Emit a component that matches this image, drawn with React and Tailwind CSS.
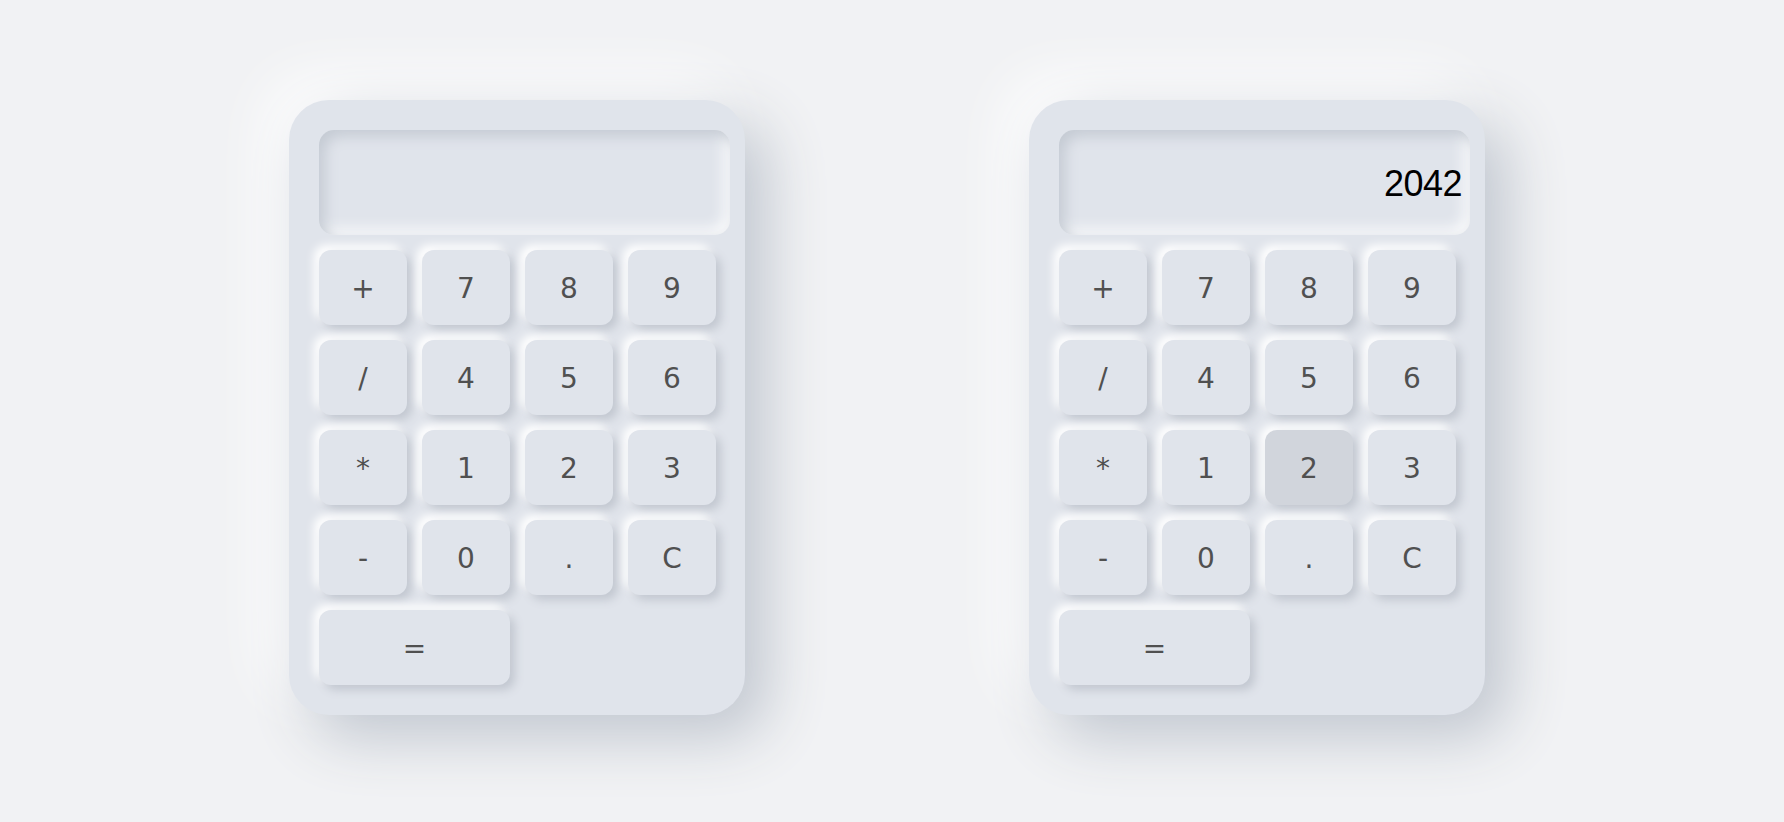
import React from "react";

const keys = [
  ["+", "7", "8", "9"],
  ["/", "4", "5", "6"],
  ["*", "1", "2", "3"],
  ["-", "0", ".", "C"],
];

function Key({ label, pressed, wide }) {
  return (
    <button
      className={
        "h-[75px] rounded-xl flex items-center justify-center pt-[2px] text-[28px] text-[#505050] font-['Tahoma','DejaVu_Sans',sans-serif] shadow-[5px_5px_10px_#c2c7d0,-5px_-5px_10px_#ffffff] " +
        (pressed ? "bg-[#d1d5dc] " : "bg-[#e0e4eb] ") +
        (wide ? "col-span-2" : "")
      }
    >
      {label}
    </button>
  );
}

function Calculator({ value, pressedKey }) {
  return (
    <div className="w-[456px] h-[615px] shrink-0 rounded-[40px] bg-[#e0e4eb] p-[30px] shadow-[22px_22px_60px_#c0c6cf,-20px_-20px_60px_#ffffff] flex flex-col gap-[15px]">
      <div className="w-[411px] h-[105px] shrink-0 rounded-[15px] bg-[#e0e4eb] shadow-[inset_6px_6px_14px_#c4cad3,inset_-6px_-6px_14px_#fafbfc] flex items-center justify-end pr-[8px] pt-[3px]">
        <span className="text-[36px] tracking-[-0.5px] text-black font-['Tahoma','Liberation_Sans',sans-serif] leading-none">
          {value}
        </span>
      </div>
      <div className="grid grid-cols-[repeat(4,88px)] gap-x-[15px] gap-y-[15px]">
        {keys.flat().map((k) => (
          <Key key={k} label={k} pressed={pressedKey === k} />
        ))}
        <Key label="=" wide />
      </div>
    </div>
  );
}

export default function App() {
  return (
    <div className="w-full h-[822px] bg-[#f1f2f4] flex items-start pt-[100px] pl-[289px] gap-[284px] overflow-hidden">
      <Calculator value="" />
      <Calculator value="2042" pressedKey="2" />
    </div>
  );
}
